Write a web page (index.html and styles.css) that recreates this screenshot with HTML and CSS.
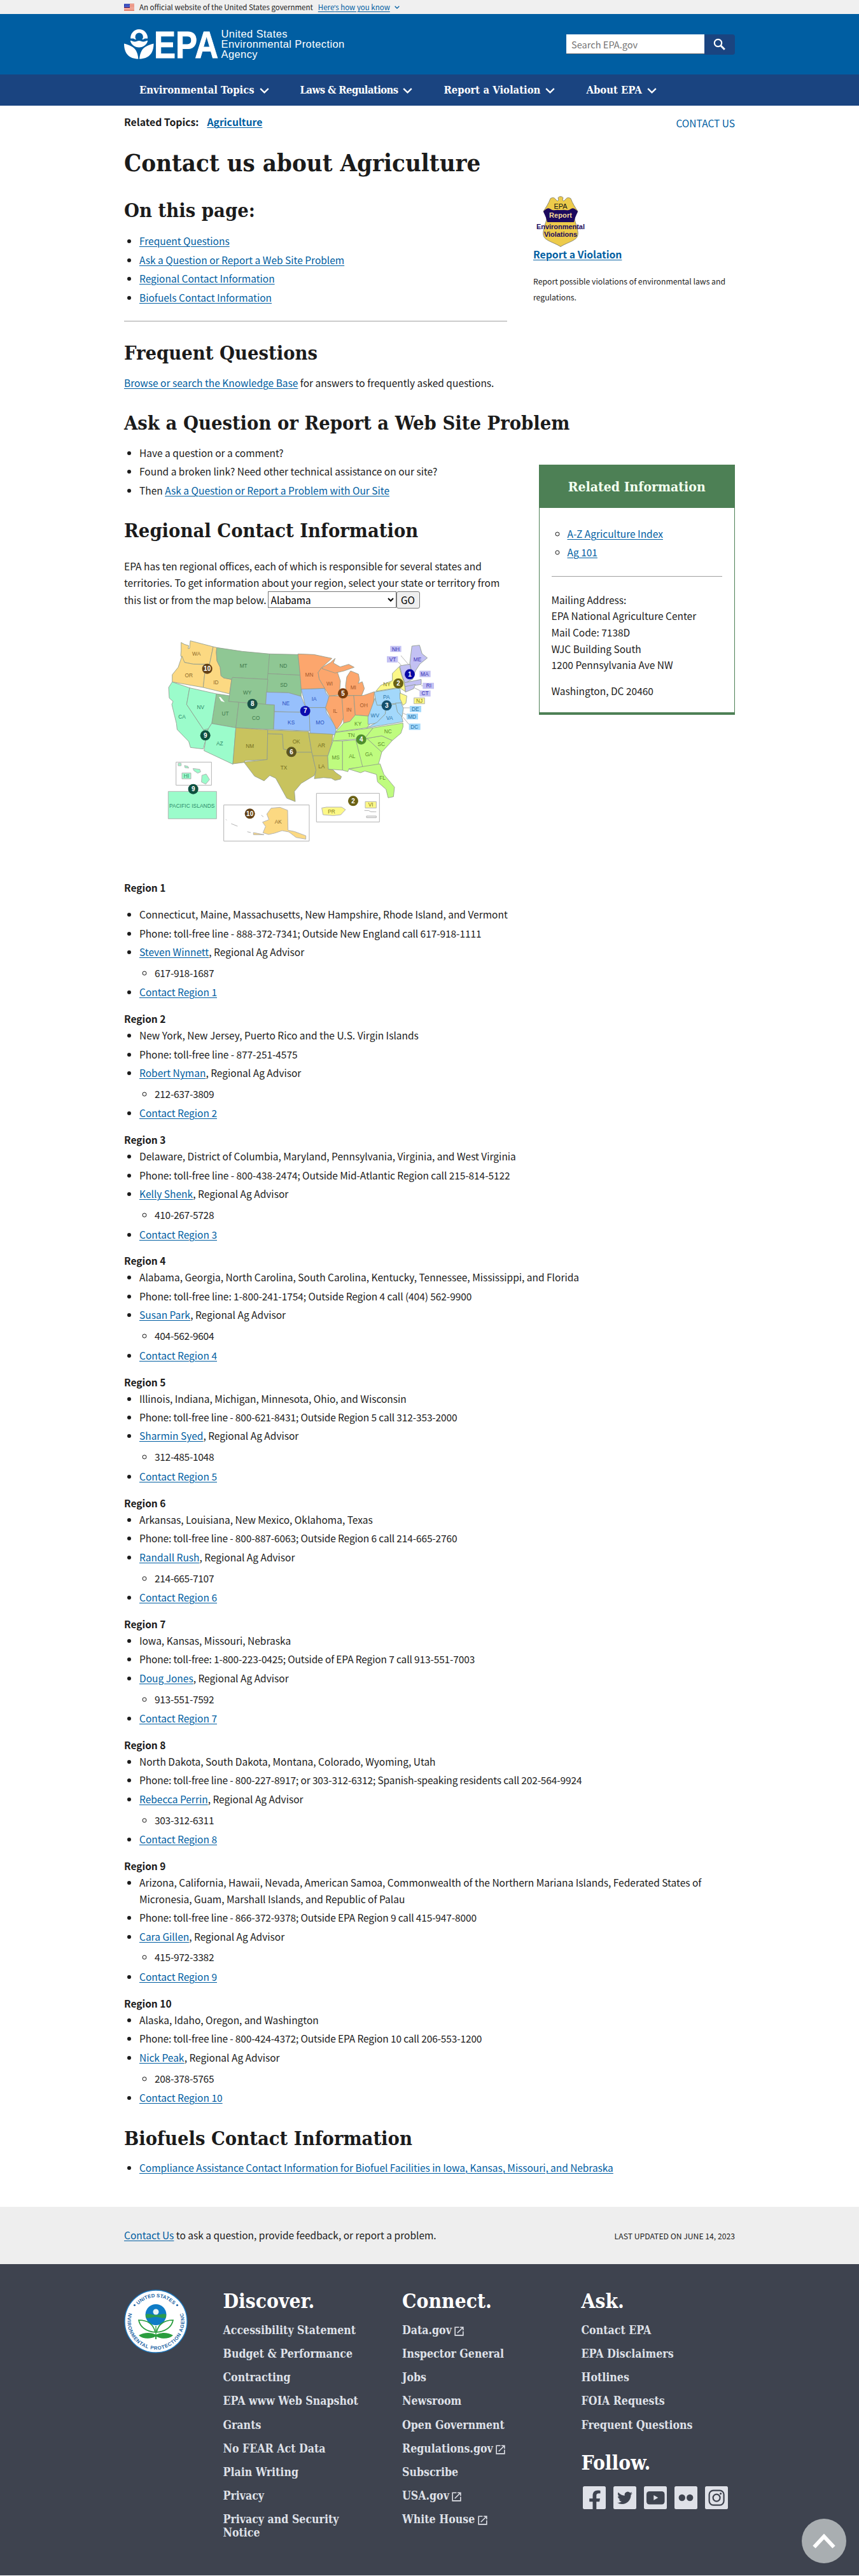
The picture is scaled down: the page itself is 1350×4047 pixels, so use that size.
FILE: index.html
```
<!DOCTYPE html>
<html lang="en">
<head>
<meta charset="utf-8">
<title>Contact us about Agriculture | US EPA</title>
<link rel="stylesheet" href="styles.css">
</head>
<body>
<svg width="0" height="0" class="defs">
  <symbol id="chev" viewBox="0 0 15 9"><path d="M1.2 1.2 7.5 7.3l6.3-6.1" fill="none" stroke="currentColor" stroke-width="2.4"/></symbol>
  <symbol id="ext" viewBox="0 0 24 24"><path fill="currentColor" d="M19 19H5V5h7V3H3v18h18v-9h-2v7zM14 3v2h3.6l-9.8 9.8 1.4 1.4L19 6.4V10h2V3h-7z"/></symbol>
</svg>

<div class="banner"><div class="wrap banner-in">
  <svg class="flag" viewBox="0 0 16 11"><path fill="#fff" d="M0 0h16v11H0z"/><path stroke="#db3e1f" stroke-width="1" d="M0 .5h16M0 2.5h16M0 4.5h16M0 6.5h16M0 8.5h16M0 10.5h16"/><path fill="#1e33b1" d="M0 0h9v6H0z"/><path stroke="#fff" stroke-width=".7" stroke-dasharray=".8 1.2" d="M1 1.5h8M2 3h7M1 4.5h8"/></svg>
  <span>An official website of the United States government</span>
  <a href="#" class="know">Here<span class="apos">’</span>s how you know</a>
  <svg class="know-chev" viewBox="0 0 15 9"><use href="#chev"/></svg>
</div></div>

<header class="header"><div class="wrap header-in">
  <svg class="logo" viewBox="0 0 270 50" width="270" height="50">
    <g fill="#fff">
      <path d="M23.300 0a13.500 13.500 0 0 1 13.700 14.500h-4c-1.500 0-2.500 2.200-4.700 1.300 1.300-1.200 1.700-2.500 1.500-4.300a6 6 0 0 0-12.200 0c-.2 1.800.3 3.200 1.500 4.300-2.200.9-3.200-1.300-4.700-1.300h-4.200A13.500 13.500 0 0 1 23.300 0z"/>
      <path d="M9.800 17.800c3 0 4 1.800 7 1.800s4-1.600 6.700-1.600 4 1.600 6.700 1.600 4-1.800 7-1.800C36 24.500 30 28.400 23.500 28.400S11 24.500 9.800 17.800z"/>
      <path d="M0 22.500c8 2 15 5 18.500 10.500 2.300 3.700 3.300 8 3.900 13.500C8 46.500 0 38 0 22.500zM46.500 22.500c-8 2-15 5-18.500 10.500-2.300 3.700-3.300 8-3.900 13.500C38.500 46.500 46.500 38 46.500 22.500z"/>
    </g>
    <text class="logo-epa" x="47" y="44.700" textLength="101" lengthAdjust="spacingAndGlyphs">EPA</text>
    <g class="logo-name"><text x="152.500" y="12.800">United States</text><text x="152.500" y="29">Environmental Protection</text><text x="152.500" y="45.300">Agency</text></g>
  </svg>
  <form class="search">
    <input type="text" placeholder="Search EPA.gov" aria-label="Search">
    <button type="button" aria-label="Search"><svg viewBox="0 0 20 20" width="20" height="20"><circle cx="7.500" cy="7.500" r="5.700" fill="none" stroke="#fff" stroke-width="2.200"/><path d="m11.800 11.800 6 6" stroke="#fff" stroke-width="3"/></svg></button>
  </form>
</div></header>

<nav class="nav"><div class="wrap nav-in">
  <a href="#">Environmental Topics<svg><use href="#chev"/></svg></a>
  <a href="#" class="laws">Laws &amp; Regulations<svg><use href="#chev"/></svg></a>
  <a href="#">Report a Violation<svg><use href="#chev"/></svg></a>
  <a href="#">About EPA<svg><use href="#chev"/></svg></a>
</div></nav>

<main class="wrap main">
  <div class="topics"><div><b>Related Topics:</b><a href="#"><b>Agriculture</b></a></div><a href="#" class="contact">CONTACT US</a></div>
  <h1>Contact us about Agriculture</h1>

  <div class="intro">
    <div class="narrow">
      <h2>On this page:</h2>
      <ul>
        <li><a href="#">Frequent Questions</a></li>
        <li><a href="#">Ask a Question or Report a Web Site Problem</a></li>
        <li><a href="#">Regional Contact Information</a></li>
        <li><a href="#">Biofuels Contact Information</a></li>
      </ul>
      <hr>
    </div>
    <aside class="violation">
      <svg viewBox="0 0 80 80" width="80" height="80">
        <path fill="#edcb4b" stroke="#8f8a72" stroke-width="1" d="M23 4c3-2 6-2 8 1l3 3 2-2-1-3c1-3 7-3 8 0l-1 3 2 2 3-3c2-3 5-3 8-1 3 8 7 14 11 20-1 4-5 5-5 10s2 9 3 13 3 10 2 14c-1 9-15 11-27 18.500-12-7.500-26-9.500-27-18.500-1-4 1-10 2-14s3-8 3-13-4-6-5-10c4-6 8-12 11-20z"/>
        <path fill="#1c0a5e" d="M12 24c5-5 8-6 12-3 5 3 8 0 12 1h6c4-1 7 2 12-1 4-3 7-2 12 3-2 6-4 8-6 17H18c-2-9-4-11-6-17z"/>
        <g class="badge"><text x="39" y="19.500" class="plain" textLength="21">EPA</text><text x="39" y="34" fill="#f6dc98" textLength="36">Report</text><text x="39" y="51.500" fill="#1c0a5e" textLength="76">Environmental</text><text x="39" y="64" fill="#1c0a5e" textLength="52">Violations</text></g>
      </svg>
      <a href="#"><b>Report a Violation</b></a>
      <p>Report possible violations of environmental laws and regulations.</p>
    </aside>
  </div>

  <h2 class="h-fq">Frequent Questions</h2>
  <p class="fq"><a href="#">Browse or search the Knowledge Base</a> for answers to frequently asked questions.</p>

  <h2 class="h-ask">Ask a Question or Report a Web Site Problem</h2>
  <div class="ask">
    <div class="narrow">
      <ul>
        <li>Have a question or a comment?</li>
        <li>Found a broken link? Need other technical assistance on our site?</li>
        <li>Then <a href="#">Ask a Question or Report a Problem with Our Site</a></li>
      </ul>
      <h2 class="h-reg">Regional Contact Information</h2>
      <p class="reg">EPA has ten regional offices, each of which is responsible for several states and<br>territories. To get information about your region, select your state or territory from<br><span class="pick"><span>this list or from the map below.</span><select aria-label="State"><option>Alabama</option></select><button type="button">GO</button></span></p>
      <svg class="map" viewBox="0 0 1380 1110" width="460" height="370" role="img" aria-label="Map of EPA regions">
        <g class="st" stroke-linejoin="round">
          <g fill="#fcd982"><path d="M134 88l16 9 20 6-3 14 7-2 3-35 108 28-9 44-8 38-78 0-40-8-18-32 2-24z"/><path d="M138 152l12 30 40 8 60 2-12 108-146-26 0-34 28-35z"/><path d="M285 108l17 4-2 23 3 40 15 30 4 40 13 10 37 7-10 68-124-30 12-108 18-2 8-38z"/></g>
          <g fill="#8fc794"><path d="M302 112l120 18 129 12-4 120-171-9-6 9-35-7-13-10-4-40-15-30-3-40z"/><path d="M551 142l134 3 7 50 3 47-152-7z"/><path d="M543 235l152 7 5 28v72l-60-17-104-3z"/><path d="M376 253l167 9-10 118-175-14 14-104z"/><path d="M300 330l62 9-4 27 48 4-14 120-114-20z"/><path d="M406 370l168 12-4 116-178-8z"/></g>
          <path fill="#fff" stroke="none" d="M312 344l8 2 20 24-18-6z"/>
          <g fill="#9bfccb"><path d="M92 274l82 28-14 78 80 120 22-5-12 50-12 45-60-7-8-28-55-57-3-28-22-90 6-14-18-16-3-50z"/><path d="M174 302l126 28-22 140-16 25-22 5-80-120z"/><path d="M278 470l114 20-14 172-136-64 8-53 12-50z"/></g>
          <g fill="#c8c35e"><path d="M392 490l150 10-2 140-105 5-3 8-54 7z"/><path d="M542 518l70 2 4 70 64 15 70 0 8 35 12 50-8 25-62 37-32 38 4 48-40-16-52-94-28-13-27 25-45-22-50-66 110-12z"/><path d="M542 500l193 8 2 20 13 77-70 0-64-15-4-70-70-2z"/><path d="M735 515h115l-5 45-20 65h-70l-5-20z"/><path d="M755 622h70l3 63 22 3 14 14 26 18-5 12-25 6-18-10-37-3-43 5 8-40-12-50z"/></g>
          <g fill="#97c0fc"><path d="M536 322l104 3 60 17 22 53 16 23-164-4v-32l-41-2z"/><path d="M574 414l164 4 4 87-172-7z"/><path d="M700 308l110-4 6 20 16 22-4 24-13 25h-93z"/><path d="M722 395h93l5 25 40 60 4 25-4 20-18-5-100-5-4-97z"/></g>
          <g fill="#fca66d"><path d="M685 142l75 3 85 18-50 45-15 22 5 30 27 44-112 4-5-66z"/><path d="M795 208l75 17 15 45-5 65-48 5-20-34-27-46-5-30z"/><path d="M800 205l38-22 22-20-8 22 32 18 40-12 26 14-48 17-42 10-60-20z"/><path d="M915 250l18-28 37 15 5 26-6 18 19-8 10 32-13 33-70 0-6-45z"/><path d="M832 340l60 0 8 100-12 30-20 28-8-13-30-60-15-30z"/><path d="M892 340l56-2 7 92-25 30-30 8z"/><path d="M948 338l45 0 52-18-5 75-25 40-60-5z"/></g>
          <g fill="#bffc7f"><path d="M955 430l60 5 15 30-20 25-148 20 38-42 30-8z"/><path d="M862 512l178-22-40 50-152 12z"/><path d="M850 552h45v138l-67-5-3-60z"/><path d="M895 552l63-4 32 117v10l-65 8-5 14-25-7z"/><path d="M958 548l52-8 70 65-18 65-72 5z"/><path d="M1010 540l70-12 50 22-50 55z"/><path d="M1040 490l140-22 0 18-10 30-40 34-50-22-70 12-10 0z"/><path d="M925 685l65-12 82-13 18 50 50 60-5 45-25 5-10-40-40-35-5-35-55-16-20 8z"/></g>
          <g fill="#a3d8fb"><path d="M1045 322l120-20 10 70-120 14z"/><path d="M1048 350l10 34 44 0-5 40-40 44-42 6 0-34z"/><path d="M1102 384l62-8 4 36 12 50-170 28 48-26 38-38z"/><path d="M1145 374l25-2 12 26-6 40-22-22z"/></g>
          <g fill="#fcf888"><path d="M1052 318l23-28 55-22 0-34 32-32 12 40 12 38 6 40-30-20z"/><path d="M1165 326l33 14-4 34-14 10-14-30z"/></g>
          <g fill="#c3c1f3"><path d="M1165 198l48-8 14 70-37 20-16-40z"/><path d="M1222 105l36-4 12 40 25 20-35 28-20 31-14 30-14-65z"/><path d="M1186 278l80-16 0 24-76 10z"/><path d="M1190 296l48-10-8 20-38 16z"/></g>
        </g>
        <g class="box"><path d="M110 652h167v109H110zM335 854h403v170H335zM772 799h297v135H772z"/><path fill="#9bfccb" d="M73 790h228v129H73z"/><path fill="#9bfccb" d="M232 714l20-6 16 26-18 22-20-10zM120 657h14v12h-14zM150 668l16 4 4 8-18-2zM190 682l32 4 4 12-14 6-18-12z"/>
          <path fill="#fcd982" d="M518 935l30-12-10-26 20-28 42-4 36 14 2 94 30 6 54 20v16l-46-8-34-26-32-6-36 12-28 6-26-8 12-30zM475 984l50 10h-50zM345 922l4 4M370 942l30 12M446 980l16 4M512 902l10 8"/><path fill="#fcf888" d="M797 868l22-4h72l18 12-22 24-36 4-48-4z"/><path fill="#eee" d="M998 880h20l10 6h26M1008 906h46v8h-46z"/>
          <path fill="none" d="M1170 150l38 44M1158 180l14 16M1265 292h20M1230 300l30 15M1180 396h35M1176 420l24 10M1180 440l28 34"/>
          <g fill="#c3c1f3" stroke="none"><path d="M1120 104h52v29h-52zM1104 153h52v29h-52zM1258 221h52v30h-52zM1273 278h53v29h-53zM1258 314h52v29h-52z"/></g>
          <g fill="#a3d8fb" stroke="none"><path d="M1212 387h54v29h-54zM1197 423h54v28h-54zM1208 470h54v30h-54z"/></g>
          <path fill="#9bfccb" d="M138 703h42v28h-42z"/><path fill="#fcf888" d="M1232 349h50v28h-50zM1002 838h52v30h-52z"/></g>
        <g class="lb">
          <g fill="#8c6a2a"><text x="206" y="151">WA</text><text x="170" y="252">OR</text><text x="298" y="285">ID</text><text x="592" y="942">AK</text></g>
          <g fill="#3f7a4d"><text x="428" y="206">MT</text><text x="616" y="207">ND</text><text x="618" y="296">SD</text><text x="446" y="332">WY</text><text x="342" y="432">UT</text><text x="487" y="453">CO</text></g>
          <g fill="#2c8a67"><text x="226" y="403">NV</text><text x="138" y="448">CA</text><text x="316" y="574">AZ</text><text x="159" y="726">HI</text><text x="185" y="866" textLength="214">PACIFIC ISLANDS</text></g>
          <g fill="#777020"><text x="458" y="586">NM</text><text x="677" y="564">OK</text><text x="618" y="686">TX</text><text x="796" y="581">AR</text><text x="796" y="682">LA</text></g>
          <g fill="#2a4fc0"><text x="628" y="384">NE</text><text x="653" y="474">KS</text><text x="761" y="363">IA</text><text x="789" y="474">MO</text></g>
          <g fill="#a55a2c"><text x="738" y="248">MN</text><text x="834" y="292">WI</text><text x="946" y="310">MI</text><text x="860" y="420">IL</text><text x="925" y="415">IN</text><text x="995" y="394">OH</text></g>
          <g fill="#5c8f2c"><text x="968" y="481">KY</text><text x="936" y="535">TN</text><text x="863" y="638">MS</text><text x="940" y="633">AL</text><text x="1019" y="624">GA</text><text x="1078" y="576">SC</text><text x="1109" y="516">NC</text><text x="1083" y="735">FL</text></g>
          <g fill="#2a73a8"><text x="1102" y="353">PA</text><text x="1048" y="440">WV</text><text x="1117" y="453">VA</text><text x="1238" y="410">DE</text><text x="1223" y="446">MD</text><text x="1234" y="494">DC</text></g>
          <g fill="#857a1c"><text x="1104" y="293">NY</text><text x="1257" y="372">NJ</text><text x="843" y="894">PR</text><text x="1028" y="862">VI</text></g>
          <g fill="#3530b5"><text x="1146" y="128">NH</text><text x="1131" y="176">VT</text><text x="1248" y="176">ME</text><text x="1282" y="245">MA</text><text x="1302" y="301">RI</text><text x="1284" y="337">CT</text></g>
        </g>
        <g class="num">
          <g fill="#634116"><circle cx="257" cy="212" r="24"/><circle cx="458" cy="895" r="24"/></g><circle cx="470" cy="378" r="24" fill="#175046"/><circle cx="719" cy="411" r="24" fill="#0c0cae"/><circle cx="897" cy="328" r="24" fill="#7a3c0c"/><circle cx="654" cy="604" r="24" fill="#5b5420"/><circle cx="983" cy="545" r="24" fill="#4f8f2e"/><circle cx="1103" cy="385" r="24" fill="#14506c"/><g fill="#6a6115"><circle cx="1158" cy="281" r="24"/><circle cx="945" cy="835" r="24"/></g><circle cx="1212" cy="238" r="24" fill="#0808a4"/><g fill="#0e5140"><circle cx="248" cy="526" r="24"/><circle cx="191" cy="779" r="24"/></g>
          <g fill="#fff"><text x="257" y="222">10</text><text x="458" y="905">10</text><text x="470" y="388">8</text><text x="719" y="421">7</text><text x="897" y="338">5</text><text x="654" y="614">6</text><text x="983" y="555">4</text><text x="1103" y="395">3</text><text x="1158" y="291">2</text><text x="945" y="845">2</text><text x="1212" y="248">1</text><text x="248" y="536">9</text><text x="191" y="789">9</text></g>
        </g>
      </svg>
    </div>
    <aside class="related">
      <h3>Related Information</h3>
      <div class="related-in">
        <ul class="circ"><li><a href="#">A-Z Agriculture Index</a></li><li><a href="#">Ag 101</a></li></ul>
        <hr>
        <p>Mailing Address:<br>EPA National Agriculture Center<br>Mail Code: 7138D<br>WJC Building South<br>1200 Pennsylvania Ave NW</p>
        <p class="city">Washington, DC 20460</p>
      </div>
    </aside>
  </div>

  <div class="regions">
    <h4 class="first">Region 1</h4>
    <ul><li>Connecticut, Maine, Massachusetts, New Hampshire, Rhode Island, and Vermont</li><li class="phone">Phone: toll-free line - 888-372-7341; Outside New England call 617-918-1111</li><li><a href="#">Steven Winnett</a>, Regional Ag Advisor<ul><li>617-918-1687</li></ul></li><li><a href="#">Contact Region 1</a></li></ul>
    <h4>Region 2</h4>
    <ul><li>New York, New Jersey, Puerto Rico and the U.S. Virgin Islands</li><li class="phone">Phone: toll-free line - 877-251-4575</li><li><a href="#">Robert Nyman</a>, Regional Ag Advisor<ul><li>212-637-3809</li></ul></li><li><a href="#">Contact Region 2</a></li></ul>
    <h4>Region 3</h4>
    <ul><li>Delaware, District of Columbia, Maryland, Pennsylvania, Virginia, and West Virginia</li><li class="phone">Phone: toll-free line - 800-438-2474; Outside Mid-Atlantic Region call 215-814-5122</li><li><a href="#">Kelly Shenk</a>, Regional Ag Advisor<ul><li>410-267-5728</li></ul></li><li><a href="#">Contact Region 3</a></li></ul>
    <h4>Region 4</h4>
    <ul><li>Alabama, Georgia, North Carolina, South Carolina, Kentucky, Tennessee, Mississippi, and Florida</li><li class="phone">Phone: toll-free line: 1-800-241-1754; Outside Region 4 call (404) 562-9900</li><li><a href="#">Susan Park</a>, Regional Ag Advisor<ul><li>404-562-9604</li></ul></li><li><a href="#">Contact Region 4</a></li></ul>
    <h4>Region 5</h4>
    <ul><li>Illinois, Indiana, Michigan, Minnesota, Ohio, and Wisconsin</li><li class="phone wide">Phone: toll-free line - 800-621-8431; Outside Region 5 call 312-353-2000</li><li><a href="#">Sharmin Syed</a>, Regional Ag Advisor<ul><li>312-485-1048</li></ul></li><li><a href="#">Contact Region 5</a></li></ul>
    <h4>Region 6</h4>
    <ul><li>Arkansas, Louisiana, New Mexico, Oklahoma, Texas</li><li class="phone wide">Phone: toll-free line - 800-887-6063; Outside Region 6 call 214-665-2760</li><li><a href="#">Randall Rush</a>, Regional Ag Advisor<ul><li>214-665-7107</li></ul></li><li><a href="#">Contact Region 6</a></li></ul>
    <h4>Region 7</h4>
    <ul><li>Iowa, Kansas, Missouri, Nebraska</li><li class="phone wide">Phone: toll-free: 1-800-223-0425; Outside of EPA Region 7 call 913-551-7003</li><li><a href="#">Doug Jones</a>, Regional Ag Advisor<ul><li>913-551-7592</li></ul></li><li><a href="#">Contact Region 7</a></li></ul>
    <h4>Region 8</h4>
    <ul><li>North Dakota, South Dakota, Montana, Colorado, Wyoming, Utah</li><li class="phone wide">Phone: toll-free line - 800-227-8917; or 303-312-6312; Spanish-speaking residents call 202-564-9924</li><li><a href="#">Rebecca Perrin</a>, Regional Ag Advisor<ul><li>303-312-6311</li></ul></li><li><a href="#">Contact Region 8</a></li></ul>
    <h4>Region 9</h4>
    <ul><li>Arizona, California, Hawaii, Nevada, American Samoa, Commonwealth of the Northern Mariana Islands, Federated States of Micronesia, Guam, Marshall Islands, and Republic of Palau</li><li class="phone wide">Phone: toll-free line - 866-372-9378; Outside EPA Region 9 call 415-947-8000</li><li><a href="#">Cara Gillen</a>, Regional Ag Advisor<ul><li>415-972-3382</li></ul></li><li><a href="#">Contact Region 9</a></li></ul>
    <h4>Region 10</h4>
    <ul><li>Alaska, Idaho, Oregon, and Washington</li><li class="phone wide">Phone: toll-free line - 800-424-4372; Outside EPA Region 10 call 206-553-1200</li><li><a href="#">Nick Peak</a>, Regional Ag Advisor<ul><li>208-378-5765</li></ul></li><li><a href="#">Contact Region 10</a></li></ul>
  </div>

  <h2 class="h-bio">Biofuels Contact Information</h2>
  <ul class="bio"><li><a href="#">Compliance Assistance Contact Information for Biofuel Facilities in Iowa, Kansas, Missouri, and Nebraska</a></li></ul>
</main>

<div class="pagefoot"><div class="wrap pagefoot-in">
  <span><a href="#">Contact Us</a> to ask a question, provide feedback, or report a problem.</span>
  <span class="updated">LAST UPDATED ON JUNE 14, 2023</span>
</div></div>

<footer class="footer"><div class="wrap footer-in">
  <svg class="seal" viewBox="0 0 100 100" width="100" height="100">
    <defs><path id="arcTop" d="M12 50a38 38 0 0 1 76 0"/><path id="arcBot" d="M8.300 34a44.600 44.600 0 1 0 83.400 0"/></defs>
    <circle cx="50" cy="50" r="49" fill="#fff" stroke="#1d79c0" stroke-width="1.400"/>
    <g class="seal-t"><text><textPath href="#arcTop" startOffset="50%" textLength="62">UNITED STATES</textPath></text><text><textPath href="#arcBot" startOffset="50%" textLength="178">ENVIRONMENTAL PROTECTION AGENCY</textPath></text></g>
    <g fill="#2265a5"><circle cx="16.500" cy="24.500" r="1.600"/><circle cx="83.500" cy="24.500" r="1.600"/></g>
    <circle cx="50" cy="39.500" r="16.500" fill="#0f7cc6"/><path fill="#2c9b4e" d="M34 39c5-2 10 1 16 1s11-3 16-1v5c-5 2-11-1-16-1s-11 3-16 1z"/><circle cx="50" cy="35" r="4.500" fill="#e8f4f7"/>
    <path fill="#fff" stroke="#2a9d3e" stroke-width="1.700" d="M49 67c-14-1-24-8-26-19 14 0 23 6 26 19zM51 67c14-1 24-8 26-19-14 0-23 6-26 19z"/>
    <path fill="#2a9d3e" d="M23 72c8-5 20-5 27-1 7-4 19-4 27 1-7 6-18 6-26 2v4h-2v-4c-8 4-19 4-26-2zM49.300 57h1.400v16h-1.400z"/>
  </svg>
  <div class="col">
    <h3>Discover.</h3>
    <ul><li>Accessibility Statement</li><li>Budget &amp; Performance</li><li>Contracting</li><li>EPA www Web Snapshot</li><li>Grants</li><li>No FEAR Act Data</li><li>Plain Writing</li><li>Privacy</li><li>Privacy and Security Notice</li></ul>
  </div>
  <div class="col">
    <h3>Connect.</h3>
    <ul><li>Data.gov <svg><use href="#ext"/></svg></li><li>Inspector General</li><li>Jobs</li><li>Newsroom</li><li>Open Government</li><li>Regulations.gov <svg><use href="#ext"/></svg></li><li>Subscribe</li><li>USA.gov <svg><use href="#ext"/></svg></li><li>White House <svg><use href="#ext"/></svg></li></ul>
  </div>
  <div class="col">
    <h3>Ask.</h3>
    <ul><li>Contact EPA</li><li>EPA Disclaimers</li><li>Hotlines</li><li>FOIA Requests</li><li>Frequent Questions</li></ul>
    <h3 class="follow">Follow.</h3>
    <div class="social">
      <svg viewBox="0 0 36 36"><rect width="36" height="36" rx="2.500"/><path class="k" d="M15.500 36V24.200h-5.300v-5h5.300v-4.500c0-5.300 3-8.200 7.800-8.200 1.600 0 3.200.2 4.200.4v4.400h-2.700c-2.600 0-3.500 1.500-3.500 3.300v4.600H27l-.9 5h-4.800V36z"/></svg>
      <svg viewBox="0 0 36 36"><rect width="36" height="36" rx="2.500"/><path class="k" transform="translate(6 6.300)" d="M24 4.600a10 10 0 0 1-2.800.8 5 5 0 0 0 2.100-2.700 10 10 0 0 1-3.100 1.200 4.900 4.900 0 0 0-8.400 4.500C7.700 8.100 4.100 6.100 1.700 3.100a4.900 4.900 0 0 0 1.500 6.600 5 5 0 0 1-2.200-.6v.1a4.900 4.900 0 0 0 4 4.800 5 5 0 0 1-2.300.1 4.900 4.900 0 0 0 4.600 3.400A9.900 9.900 0 0 1 0 19.500a14 14 0 0 0 7.500 2.200c9.100 0 14-7.500 14-14v-.6A10 10 0 0 0 24 4.600z"/></svg>
      <svg viewBox="0 0 36 36"><rect width="36" height="36" rx="2.500"/><rect class="k" x="4" y="8" width="28.500" height="20.500" rx="4.500"/><path d="M15.300 14v8l7-4z"/></svg>
      <svg viewBox="0 0 36 36"><rect width="36" height="36" rx="2.500"/><circle class="k" cx="11.800" cy="18" r="5.200"/><circle class="k" cx="24.200" cy="18" r="5.200"/></svg>
      <svg viewBox="0 0 36 36"><rect width="36" height="36" rx="2.500"/><g fill="none" class="ks"><rect x="6.600" y="6.600" width="23" height="23" rx="6.500"/><circle cx="18.100" cy="18.100" r="5.500"/></g><circle class="k" cx="24.600" cy="11.600" r="1.600"/></svg>
    </div>
  </div>
</div></footer>
<a href="#" class="totop" aria-label="Back to top"><svg viewBox="0 0 36 24" width="36" height="24"><path d="M2.500 21.500 18 5l15.500 16.500" fill="none" stroke="#fff" stroke-width="6"/></svg></a>
</body>
</html>
```
FILE: styles.css
```
* { box-sizing: border-box; }
body { margin: 0; position: relative; background: #fff; color: #1b1b1b; font: 15.5px/25.6px "Noto Sans CJK SC", "Open Sans", sans-serif; }
h1, h2, h3, h4, p, ul { margin: 0; padding: 0; }
h1, h2, h3, .nav, .col { font-family: "DejaVu Serif Condensed", "DejaVu Serif", serif; font-stretch: condensed; font-weight: 700; }
a { color: #005ea2; text-underline-offset: 2px; text-decoration-thickness: 1px; }
b { font-size: 15.75px; }
svg { display: block; }
.defs { position: absolute; }
.wrap { width: 960px; margin: 0 auto; }

.banner { background: #f0f0f0; height: 22px; font-size: 11.5px; line-height: 22px; }
.banner-in { display: flex; align-items: center; }
.flag { width: 16px; height: 11px; margin-right: 8px; }
.know { margin-left: 8px; }
.apos { font-family: "Open Sans", sans-serif; line-height: 1; }
.know-chev { width: 8px; height: 5px; margin-left: 7px; color: #005ea2; }

.header { background: #005ea2; height: 95px; }
.header-in { display: flex; justify-content: space-between; }
.logo { margin-top: 24px; overflow: visible; }
.logo-epa { font: 700 60px "Liberation Sans", sans-serif; fill: #fff; stroke: #fff; stroke-width: 1px; }
.logo-name { font: 16.5px "Liberation Sans", sans-serif; letter-spacing: .41px; fill: #fff; }
.search { display: flex; margin-top: 32px; width: 265px; height: 32px; }
.search input { width: 217px; height: 31px; margin: 0; padding: 0 8px; border: 1px solid #565c65; border-width: 0 0 1px 0; background: #fff; font: 14.6px "Noto Sans CJK SC", sans-serif; color: #1b1b1b; }
.search input::placeholder { color: #757575; }
.search button { width: 48px; height: 32px; border: 0; border-radius: 0 4px 4px 0; background: #1a4480; padding: 0 0 1px 14px; }

.nav { background: #1a4480; height: 49px; font-size: 16.5px; line-height: 49px; }
.nav-in { display: flex; padding-left: 24px; gap: 49px; }
.nav a { display: flex; align-items: center; color: #fff; text-decoration: none; }
.nav .laws { letter-spacing: -.6px; }
.nav svg { width: 15px; height: 9px; margin: 2px 0 0 8px; }

.main { padding-top: 13.4px; }
.topics { display: flex; justify-content: space-between; }
.topics div a { margin-left: 13px; }
.contact { text-decoration: none; padding-top: 1.5px; margin-bottom: -1.5px; }
h1 { font-size: 38.1px; line-height: 48px; margin-top: 26.8px; }
h2 { font-size: 30.6px; line-height: 40px; white-space: nowrap; }
.intro, .ask { display: flex; justify-content: space-between; }
.narrow { width: 602px; }
.intro h2 { margin-top: 30.3px; }
.intro ul { margin-top: 16px; }
hr { border: 0; height: 1px; background: #a0a0a0; margin: 23.5px 0 0; }
ul { padding-left: 24px; }
li + li { margin-top: 3.9px; }

.violation { width: 317px; padding-top: 28.500px; }
.violation svg { margin-left: 4px; }
.violation a { display: block; margin-top: -1px; }
.violation p { font-size: 12.25px; line-height: 25px; margin-top: 17px; }
.badge { font: 700 11px "Liberation Sans", sans-serif; text-anchor: middle; fill: #1c0a5e; }
.badge .plain { font-weight: 400; fill: #111; }

.h-fq { margin-top: 29.1px; }
.fq { margin-top: 15.6px; }
.h-ask { margin-top: 28.8px; }
.ask ul { margin-top: 15.3px; }
.h-reg { margin-top: 29.7px; }
.reg { margin-top: 22.4px; height: 83px; white-space: nowrap; line-height: 26px; }
.pick { display: flex; align-items: center; padding-top: 1px; }
.pick select { width: 202px; height: 26px; margin-left: 2px; padding: 0; border: 1px solid #767676; background: #fff; font: 15.4px "Noto Sans CJK SC", sans-serif; color: #000; border-radius: 0; }
.pick button { width: 37px; height: 27px; padding: 0; border: 1px solid #767676; border-radius: 3px; background: #efefef; font: 15.4px/24px "Noto Sans CJK SC", sans-serif; color: #000; }
.map { margin: 21px 0 0 45px; }
.st path { stroke: #8e9a8c; stroke-width: 2.500; }
.st path[stroke="none"] { stroke: none; }
.box { fill: #fff; stroke: #b4b4b4; stroke-width: 3; }
.lb { font: 25px "Liberation Sans", sans-serif; text-anchor: middle; }
.num { font: 700 30px "Liberation Sans", sans-serif; text-anchor: middle; }

.related { width: 308.500px; height: 393px; margin-top: 46px; border: 1px solid #4d8055; border-bottom-width: 4px; }
.related h3 { background: #4d8055; color: #f3fff0; font-size: 21.05px; line-height: 67px; text-align: center; }
.related-in { padding: 28px 19px 0 19px; }
.related ul { padding-left: 25px; margin: 0; }
.related li + li { margin-top: 4px; }
.circ, .regions ul ul { list-style: circle; }
.related hr { margin: 24px 0 24px; }
.city { margin-top: 15px; }

.regions { margin-top: 32.4px; }
.regions h4 { font-size: 15.5px; line-height: 25.6px; margin-top: 16.3px; }
.regions h4.first { margin: 0 0 16.4px; }
.regions ul { margin-top: .4px; }
.regions ul ul { margin-top: 7.3px; letter-spacing: -.3px; }
.regions li:last-child:not(:first-child) { margin-top: 4.8px; }
.phone { letter-spacing: -.07px; }
.phone.wide { letter-spacing: -.14px; }
.h-bio { margin-top: 30px; }
.bio { margin-top: 14.6px; padding-bottom: 48.7px; letter-spacing: -.05px; }

.pagefoot { background: #eee; height: 89.7px; padding-top: 31.7px; }
.pagefoot-in { display: flex; justify-content: space-between; align-items: baseline; }
.updated { font-size: 12.2px; }

.footer { background: #3e434f; height: 489.300px; }
.footer-in { display: flex; padding-top: 38.1px; }
.seal { margin: 2px 55.500px 0 0; }
.seal-t { font: 700 7.800px "Liberation Sans", sans-serif; fill: #2265a5; text-anchor: middle; }
.col { width: 240px; margin-right: 41.500px; color: #dfe1e8; font-size: 17.6px; line-height: 20.7px; }
.col:last-child { margin-right: 0; }
.col h3 { font-size: 31.5px; line-height: 40px; color: #fff; margin-bottom: 15.8px; }
.col ul { list-style: none; padding: 0; }
.col li + li { margin-top: 16.45px; }
.col li svg { display: inline-block; width: 19px; height: 19px; margin: -4px 0 -5px -3px; }
.col .follow { margin: 28.9px 0 17px; }
.social { display: flex; gap: 12px; margin-left: 2.500px; }
.social svg { width: 36px; height: 36px; fill: #dfe1e8; }
.social .k { fill: #3e434f; }
.social .ks { stroke: #3e434f; stroke-width: 2.200; }
.totop { position: absolute; left: 1260px; top: 3957px; width: 70px; height: 70px; border-radius: 50%; background: #a9aeb1; display: flex; align-items: center; justify-content: center; }
```
